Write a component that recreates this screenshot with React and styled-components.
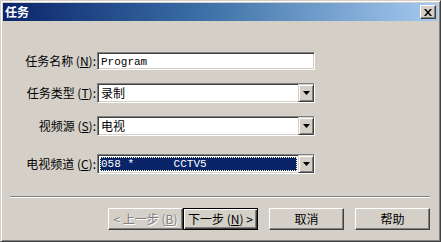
import styled, { createGlobalStyle } from 'styled-components';

const GlobalStyle = createGlobalStyle`
    html, body {
        margin: 0;
        padding: 0;
        background: #d4d0c8;
    }
    * {
        box-sizing: border-box;
    }
`;

const Window = styled.div`
    width: 441px;
    height: 242px;
    background: #d4d0c8;
    border: 1px solid;
    border-color: #d4d0c8 #404040 #404040 #d4d0c8;
    box-shadow: inset 1px 1px #fff, inset -1px -1px #808080;
    padding: 2px;
    display: flex;
    flex-direction: column;
    font-family: "Noto Sans CJK SC", "Liberation Sans", sans-serif;
    font-size: 12px;
    color: #000;
`;

const TitleBar = styled.div`
    height: 18px;
    display: flex;
    align-items: center;
    justify-content: space-between;
    padding: 0 2px 0 2px;
    background: linear-gradient(to right, #0a246a 0%, #3a6ea5 45%, #a6caf0 100%);
`;

const Title = styled.span`
    color: #fff;
    font-weight: bold;
    font-size: 12px;
    line-height: 14px;
`;

const CloseButton = styled.div`
    width: 16px;
    height: 14px;
    background: #d4d0c8;
    border: 1px solid;
    border-color: #fff #404040 #404040 #fff;
    box-shadow: inset -1px -1px #808080;
    display: flex;
    align-items: center;
    justify-content: center;
`;

const Form = styled.div`
    display: flex;
    flex-direction: column;
    padding-top: 31px;
`;

const Row = styled.div`
    display: flex;
    align-items: center;
    margin-top: ${p => p.$top || 0}px;
`;

const Label = styled.label`
    width: 94px;
    text-align: right;
    padding-right: 1px;
    line-height: 14px;
    white-space: nowrap;
`;

const Sunken = styled.div`
    width: 218px;
    height: ${p => p.$h}px;
    background: #fff;
    border: 1px solid;
    border-color: #808080 #fff #fff #808080;
    box-shadow: inset 1px 1px #404040, inset -1px -1px #d4d0c8;
    padding: 2px;
    display: flex;
    align-items: stretch;
`;

const InputText = styled.span`
    font-family: "Liberation Mono", "DejaVu Sans Mono", monospace;
    font-size: 11px;
    line-height: 14px;
    padding-left: 1px;
`;

const ComboValue = styled.div`
    flex: 1;
    display: flex;
    align-items: center;
    padding-left: 1px;
    line-height: 14px;
    background: ${p => (p.$focused ? '#0a246a' : 'transparent')};
    color: ${p => (p.$focused ? '#fff' : '#000')};
    outline: ${p => (p.$focused ? '1px dotted #ffffc0' : 'none')};
    outline-offset: -1px;
    margin-right: 1px;
`;

const Mono = styled.span`
    font-family: "Liberation Mono", "DejaVu Sans Mono", monospace;
    font-size: 11px;
    white-space: pre;
`;

const DropButton = styled.div`
    width: 16px;
    margin: -2px -2px -2px 0;
    background: #d4d0c8;
    border: 1px solid;
    border-color: #d4d0c8 #404040 #404040 #d4d0c8;
    box-shadow: inset 1px 1px #fff, inset -1px -1px #808080;
    display: flex;
    align-items: center;
    justify-content: center;
`;

const Separator = styled.div`
    margin: 22px 8px 0 7px;
    height: 2px;
    border-top: 1px solid #808080;
    border-bottom: 1px solid #fff;
`;

const Buttons = styled.div`
    display: flex;
    justify-content: flex-end;
    margin-top: 10px;
    padding-right: 8px;
`;

const Button = styled.button`
    width: 75px;
    height: 22px;
    margin-left: ${p => p.$gap || 0}px;
    padding: 0;
    font-family: "Noto Sans CJK SC", "Liberation Sans", sans-serif;
    font-size: 12px;
    line-height: 14px;
    background: #d4d0c8;
    color: ${p => (p.disabled ? '#808080' : '#000')};
    text-shadow: ${p => (p.disabled ? '1px 1px #fff' : 'none')};
    border: 1px solid;
    border-color: ${p => (p.$default ? '#000' : '#fff #404040 #404040 #fff')};
    box-shadow: ${p =>
        p.$default
            ? 'inset 1px 1px #fff, inset -1px -1px #404040, inset -2px -2px #808080'
            : 'inset -1px -1px #808080'};
`;

const Arrow = () => (
    <svg width="7" height="4" viewBox="0 0 7 4">
        <path d="M0 0h7L3.5 4z" fill="#000" />
    </svg>
);

const Combo = ({ children, focused }) => (
    <Sunken $h={20}>
        <ComboValue $focused={focused}>{children}</ComboValue>
        <DropButton>
            <Arrow />
        </DropButton>
    </Sunken>
);

export default function App() {
    return (
        <>
            <GlobalStyle />
            <Window>
                <TitleBar>
                    <Title>任务</Title>
                    <CloseButton>
                        <svg width="8" height="7" viewBox="0 0 8 7">
                            <path d="M0 0h2l2 2.5L6 0h2L5 3.5 8 7H6L4 4.5 2 7H0l3-3.5z" fill="#000" />
                        </svg>
                    </CloseButton>
                </TitleBar>
                <Form>
                    <Row>
                        <Label>任务名称 (<u>N</u>):</Label>
                        <Sunken $h={18}>
                            <InputText>Program</InputText>
                        </Sunken>
                    </Row>
                    <Row $top={13}>
                        <Label>任务类型 (<u>T</u>):</Label>
                        <Combo>录制</Combo>
                    </Row>
                    <Row $top={13}>
                        <Label>视频源 (<u>S</u>):</Label>
                        <Combo>电视</Combo>
                    </Row>
                    <Row $top={18}>
                        <Label>电视频道 (<u>C</u>):</Label>
                        <Combo focused>
                            <Mono>{'058 *      CCTV5'}</Mono>
                        </Combo>
                    </Row>
                </Form>
                <Separator />
                <Buttons>
                    <Button disabled>&lt; 上一步 (<u>B</u>)</Button>
                    <Button $default>下一步 (<u>N</u>) &gt;</Button>
                    <Button $gap={11}>取消</Button>
                    <Button $gap={11}>帮助</Button>
                </Buttons>
            </Window>
        </>
    );
}
